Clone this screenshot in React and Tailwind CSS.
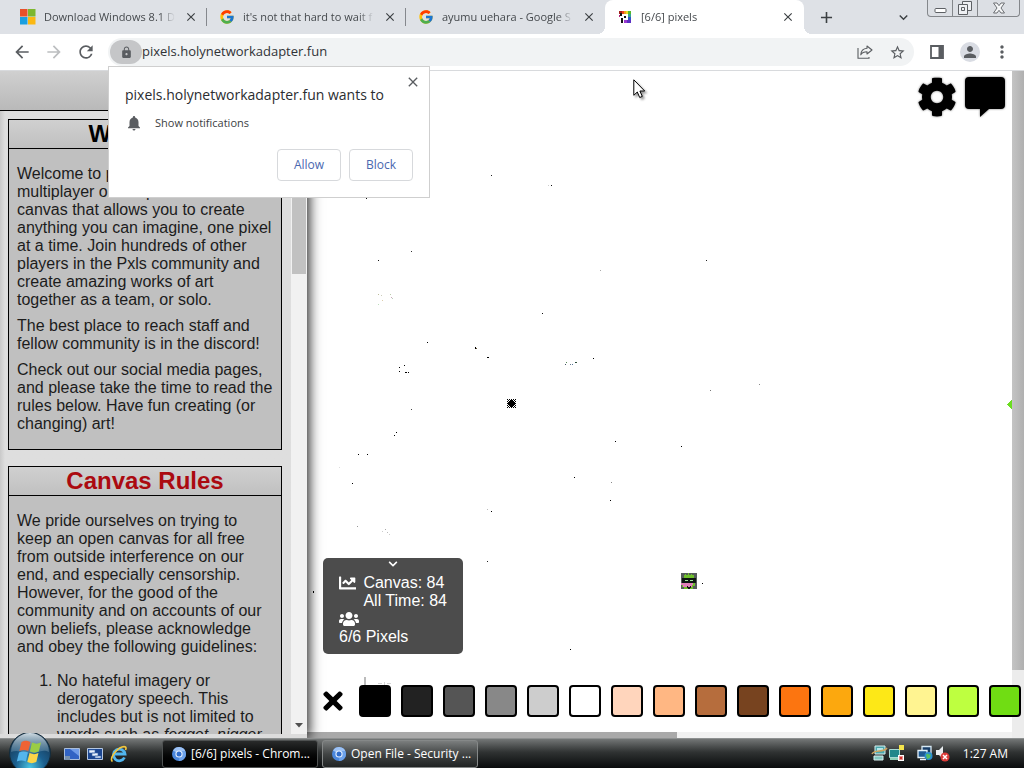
import React from "react";
import {
  MdArrowBack,
  MdArrowForward,
  MdRefresh,
  MdLock,
  MdStarBorder,
  MdNotifications,
  MdPerson,
  MdMoreVert,
  MdClose,
  MdAdd,
  MdExpandMore,
} from "react-icons/md";
import { FaCog, FaChartLine, FaUsers, FaTimes, FaChevronDown } from "react-icons/fa";
import { FcGoogle } from "react-icons/fc";

const ui = "font-['Open_Sans','Noto_Sans',sans-serif]";

function WindowsTiles() {
  return (
    <svg width="16" height="16" viewBox="0 0 16 16" className="shrink-0" aria-hidden="true">
      <path fill="#e8502a" d="M0 0h7.5v7.5H0z" />
      <path fill="#7db72f" d="M8 0h7.5v7.5H8z" />
      <path fill="#1a9fe0" d="M0 8h7.5v7.5H0z" />
      <path fill="#fbb813" d="M8 8h7.5v7.5H8z" />
    </svg>
  );
}

function GoogleG() {
  return <FcGoogle size={16} className="shrink-0" />;
}

function PxlsIcon() {
  return (
    <svg width="14" height="14" viewBox="0 0 14 14" className="mx-px shrink-0" aria-hidden="true">
      <path fill="#a3201c" d="M1 1h3v3H1z" />
      <path fill="#e8441c" d="M4 1h2v3H4z" />
      <path fill="#f0a01c" d="M6 1h2v3H6z" />
      <path fill="#e9dc27" d="M8 1h2v3H8z" />
      <path fill="#56b82c" d="M10 1h3v3h-3z" />
      <path fill="#35a58c" d="M10 4h3v3h-3z" />
      <path fill="#3353c8" d="M10 7h3v3h-3z" />
      <path fill="#5b31c4" d="M9 10h4v3H9z" />
      <path fill="#9a3bd0" d="M6 10h3v3H6z" />
      <path fill="#111" d="M2 3h2v3H2zM6 6h2v2H6zM3 8h2v5H3z" />
      <path fill="#b0207a" d="M1 5h1v2H1z" />
    </svg>
  );
}

const tabs = [
  { title: "Download Windows 8.1 D", icon: <WindowsTiles /> },
  { title: "it's not that hard to wait f", icon: <GoogleG /> },
  { title: "ayumu uehara - Google S", icon: <GoogleG /> },
  { title: "[6/6] pixels", icon: <PxlsIcon />, active: true },
];

function Tab({ title, icon, active, line }) {
  return (
    <div
      className={
        "relative flex h-[34px] w-[199px] items-center pl-3 pr-2 " +
        (active ? "rounded-t-lg bg-white" : "")
      }
    >
      {active && (
        <>
          <span className="absolute bottom-0 -left-2 size-2 bg-[radial-gradient(circle_at_0_0,transparent_8px,white_8px)]" />
          <span className="absolute bottom-0 -right-2 size-2 bg-[radial-gradient(circle_at_100%_0,transparent_8px,white_8px)]" />
        </>
      )}
      {icon}
      <span className="ml-2 flex-1 whitespace-nowrap text-[11px] leading-4 text-[#45494d] [mask-image:linear-gradient(to_right,black_88%,transparent)]">
        {title}
      </span>
      <button aria-label={"Close " + title} className="ml-2 flex size-4 items-center justify-center text-[#3c4043]">
        <MdClose size={14} />
      </button>
      {line && <span className="absolute right-0 top-2 h-[18px] w-px bg-[#85888d]" />}
    </div>
  );
}

function WindowControls() {
  return (
    <div className="flex h-[17px] w-[93px] self-start rounded-b border border-t-0 border-[#84878b] bg-[#dcdfe4]">
      <button aria-label="Minimize" className="flex flex-1 items-center justify-center border-r border-[#84878b]">
        <svg width="13" height="13" viewBox="0 0 13 13" aria-hidden="true">
          <rect x="1" y="6.5" width="11" height="4" rx="1" fill="#fff" stroke="#5d6064" />
        </svg>
      </button>
      <button aria-label="Restore" className="flex flex-1 items-center justify-center border-r border-[#84878b]">
        <svg width="14" height="14" viewBox="0 0 14 14" fill="#eef0f3" stroke="#5d6064" aria-hidden="true">
          <path d="M4.500 .5h9v9h-9z" />
          <path d="M.5 3.500h9v10h-9z" />
          <path d="M3.500 6.500h3v3h-3z" />
        </svg>
      </button>
      <button aria-label="Close window" className="flex flex-[1.7] items-center justify-center">
        <svg width="14" height="12" viewBox="0 0 14 12" fill="#f6f7f8" stroke="#6c6f73" aria-hidden="true">
          <path d="M1.500 1h3.500l2 2.700L9 1h3.500L9 6l3.500 5H9L7 8.300 5 11H1.500L5 6z" />
        </svg>
      </button>
    </div>
  );
}

function TabStrip() {
  return (
    <header className="flex h-[34px] shrink-0 bg-[#dee1e6] pl-2 pr-1">
      {tabs.map((t, i) => (
        <Tab key={t.title} {...t} line={i < 2} />
      ))}
      <button aria-label="New tab" className="ml-2 flex w-7 items-center justify-center text-[#3c4043]">
        <MdAdd size={19} />
      </button>
      <div className="flex-1" />
      <button aria-label="Search tabs" className="mr-3 flex w-6 items-center justify-center text-[#3c4043]">
        <MdExpandMore size={17} />
      </button>
      <WindowControls />
    </header>
  );
}

function Toolbar() {
  return (
    <nav className="flex h-[37px] shrink-0 items-center border-b border-[#d8dadd] bg-white pl-3 pr-3 text-[#5a5d61]">
      <div className="flex gap-3">
        <button aria-label="Back"><MdArrowBack size={20} /></button>
        <button aria-label="Forward" className="text-[#bcbec0]"><MdArrowForward size={20} /></button>
        <button aria-label="Reload"><MdRefresh size={20} /></button>
      </div>
      <div className="ml-3 flex h-7 flex-1 items-center rounded-full bg-[#f1f3f4] pl-[2px] pr-2">
        <button aria-label="View site information" className="flex h-6 w-8 items-center justify-center rounded-full bg-[#c5c6c8]">
          <MdLock size={13} />
        </button>
        <input
          aria-label="Address"
          defaultValue="pixels.holynetworkadapter.fun"
          className="min-w-0 flex-1 bg-transparent text-[13px] text-[#303236] outline-none"
        />
        <div className="flex items-center gap-4">
          <button aria-label="Share">
            <svg width="16" height="16" viewBox="0 0 16 16" fill="none" stroke="currentColor" strokeWidth="1.100" aria-hidden="true">
              <path d="M1 4v10.300h11V13" />
              <path d="M10 2l5 4-5 4V7.800C7 7.800 5 8.800 3.800 10.800 4 7 6.500 4.500 10 4.200z" strokeLinejoin="round" />
            </svg>
          </button>
          <button aria-label="Bookmark"><MdStarBorder size={17} /></button>
        </div>
      </div>
      <div className="ml-4 flex items-center gap-3">
        <button aria-label="Side panel" className="mr-1">
          <svg width="14" height="14" viewBox="0 0 14 14" aria-hidden="true">
            <path d="M1 1h12v12H1z" fill="none" stroke="currentColor" strokeWidth="1.800" />
            <path d="M8.500 1H13v12H8.500z" fill="currentColor" />
          </svg>
        </button>
        <button aria-label="Profile" className="flex size-5 items-center justify-center rounded-full bg-[#d9dce3]">
          <MdPerson size={18} />
        </button>
        <button aria-label="Menu"><MdMoreVert size={20} /></button>
      </div>
    </nav>
  );
}

function Permission() {
  return (
    <section
      role="dialog"
      aria-label="Notification permission"
      className="absolute left-[108px] top-[66px] z-20 flex h-[132px] w-[322px] flex-col border border-[#cfcfcf] bg-white p-4"
    >
      <button aria-label="Dismiss" className="absolute right-2 top-[7px] text-[#5a5d61]">
        <MdClose size={16} />
      </button>
      <h2 className="mt-0.5 text-[14px] leading-5 text-[#2b2d30]">pixels.holynetworkadapter.fun wants to</h2>
      <p className="mt-2 flex items-center text-[11px] leading-5 text-[#3c3e42]">
        <MdNotifications size={18} className="mr-3 text-[#5a5d61]" />
        Show notifications
      </p>
      <div className="mt-auto flex justify-end gap-2 text-[12px] text-[#4a68b0]">
        <button className="h-8 w-16 rounded border border-[#d7d9dc]">Allow</button>
        <button className="h-8 w-16 rounded border border-[#d7d9dc]">Block</button>
      </div>
    </section>
  );
}

function Card({ title, red, children }) {
  return (
    <article className="border border-black bg-[#c0c0c0]">
      <h2
        className={
          "h-[29px] border-b border-black bg-linear-to-b from-[#d0d0d0] to-[#c0c0c0] text-center text-[24px] font-bold leading-7 " +
          (red ? "text-[#ab0a10]" : "text-black")
        }
      >
        {title}
      </h2>
      <div className="space-y-2 px-2 py-4 text-[#1c1c1c]">{children}</div>
    </article>
  );
}

function Sidebar() {
  return (
    <aside className="relative z-10 flex w-[307px] shrink-0 flex-col bg-[#dedede] font-['Liberation_Sans',Arial,sans-serif] text-[16px] leading-[18px] shadow-[2px_0_12px_rgba(0,0,0,0.9)]">
      <h1 className="h-10 shrink-0 border-b border-black bg-linear-to-b from-[#d0d0d0] to-[#b9b9b9] text-center text-[24px] font-bold leading-[38px]">
        Canvas
      </h1>
      <div className="flex min-h-0 flex-1">
        <div className="flex-1 overflow-hidden bg-linear-to-r from-[#c9c9c9] to-[#dedede] to-[5px] py-2 pl-2 pr-[9px]">
          <div className="flex flex-col gap-4">
            <Card title="Welcome!">
              <p>
                Welcome to pixels, a free
                <br />
                multiplayer online pixel art
                <br />
                canvas that allows you to create anything you can imagine, one pixel at a time. Join hundreds
                of other players in the Pxls community and create amazing works of art together as a team, or
                solo.
              </p>
              <p>The best place to reach staff and fellow community is in the discord!</p>
              <p>
                Check out our social media pages, and please take the time to read the rules below. Have fun
                creating (or changing) art!
              </p>
            </Card>
            <Card title="Canvas Rules" red>
              <p>
                We pride ourselves on trying to keep an open canvas for all free from outside interference on
                our end, and especially censorship. However, for the good of the community and on accounts of
                our own beliefs, please acknowledge and obey the following guidelines:
              </p>
              <ol className="list-decimal pl-10 pt-2">
                <li>
                  No hateful imagery or derogatory speech. This includes but is not limited to words such as{" "}
                  <i>fegget, nigger</i>
                </li>
              </ol>
            </Card>
          </div>
        </div>
        <div className="flex w-4 flex-col items-center bg-[#f1f1f1]">
          <div className="h-[163px] w-[14px] bg-[#c1c1c1]" />
          <svg width="8" height="5" viewBox="0 0 8 5" className="mb-1.5 mt-auto" aria-hidden="true">
            <path d="M0 0h8L4 4.500z" fill="#505050" />
          </svg>
        </div>
      </div>
      <div className="h-1 shrink-0 bg-[#dcdcdc]" />
    </aside>
  );
}

const dots = [
  [491, 175, "#222"], [551, 185, "#111"], [548, 185, "#ccc"], [366, 198, "#111"], [411, 251, "#333"], [378, 260, "#111"],
  [706, 260, "#222"], [600, 270, "#aaa"], [378, 294, "#bb9"], [381, 295, "#ccb"], [382, 300, "#dca"], [378, 304, "#bdb"],
  [390, 294, "#bca"], [391, 297, "#cab"], [392, 298, "#bcb"], [542, 313, "#111"], [427, 342, "#000"], [475, 347, "#000"],
  [475, 348, "#000"], [476, 348, "#653"], [487, 357, "#000"], [488, 357, "#000"], [593, 358, "#000"], [565, 364, "#456"],
  [566, 362, "#585"], [570, 364, "#678"], [572, 364, "#579"], [575, 362, "#244"], [576, 362, "#353"], [404, 365, "#000"],
  [399, 367, "#000"], [399, 371, "#000"], [405, 372, "#000"], [406, 372, "#000"], [408, 372, "#000"], [710, 390, "#777"],
  [759, 384, "#888"], [411, 409, "#444"], [396, 432, "#000"], [394, 435, "#000"], [615, 441, "#000"], [681, 446, "#000"],
  [358, 454, "#000"], [367, 454, "#000"], [339, 467, "#ddd"], [574, 477, "#000"], [352, 483, "#000"], [611, 482, "#888"],
  [610, 500, "#000"], [487, 509, "#bbb"], [491, 511, "#000"], [357, 526, "#999"], [385, 529, "#aaa"], [387, 532, "#bbb"],
  [389, 534, "#ccc"], [382, 531, "#ccc"], [487, 561, "#222"], [313, 591, "#000"], [313, 592, "#000"], [702, 583, "#000"],
  [570, 649, "#000"],
];

const burst = ["x.x.x.x.x", ".x.xxx.x.", "x.xxxxx.x", ".xxxxxxx.", "xxxxxxxxx", ".xxxxxxx.", "x.xxxxx.x", ".x.xxx.x.", "x.x.x.x.x"];

function CanvasArt() {
  return (
    <svg className="absolute inset-0 size-full" shapeRendering="crispEdges" aria-hidden="true">
      <g transform="translate(-307 -71)">
        {dots.map(([x, y, c]) => (
          <rect key={x + "-" + y} x={x} y={y} width="1" height="1" fill={c} />
        ))}
        {burst.map((row, j) =>
          [...row].map((p, i) => p === "x" && <rect key={i + "-" + j} x={507 + i} y={399 + j} width="1" height="1" />)
        )}
        <path fill="#6bdd20" d="M1007 404h1v-1h1v-1h1v-1h1v-1h1v9h-1v-1h-1v-1h-1v-1h-1v-1h-1z" />
        <path fill="#bbb" d="M364 677h2v8h-2z" />
        <path fill="#d4d4d4" d="M378 683h4v1h-4zM384 682h1v3h-1zM387 683h4v1h-4z" />
        <path fill="#555b5b" d="M681 573h16v16h-16z" />
        <path fill="#6fc02c" d="M684 575h1v-1h1v1h2v-2h1v2h2v-1h1v1h2v3h1v8h-2v3h-9v-2h-2v-9h2z" />
        <path fill="#0c1410" d="M682 578h14v5h-14z" />
        <path fill="#a4e8a0" d="M685 580h3v1h-3zM690 580h3v1h-3z" />
        <path fill="#e07fb8" d="M681 583h12v2h-1v2h-9v-2h-2z" />
        <path fill="#111" d="M687 586h1v1h2v-1h1v2h-1v1h-2v-1h-1z" />
      </g>
    </svg>
  );
}

const swatches = [
  ["Black", "bg-[#000000]"], ["Dark grey", "bg-[#222222]"], ["Deep grey", "bg-[#555555]"], ["Medium grey", "bg-[#888888]"],
  ["Light grey", "bg-[#cdcdcd]"], ["White", "bg-[#ffffff]"], ["Beige", "bg-[#ffd5bc]"], ["Peach", "bg-[#ffb783]"],
  ["Brown", "bg-[#b66d3d]"], ["Chocolate", "bg-[#77431f]"], ["Orange", "bg-[#fc7510]"], ["Light orange", "bg-[#fca80e]"],
  ["Yellow", "bg-[#fde817]"], ["Pastel yellow", "bg-[#fff491]"], ["Lime", "bg-[#beff40]"], ["Green", "bg-[#70dd13]"],
];

function Board() {
  return (
    <main className="relative flex min-w-0 flex-1 flex-col bg-white font-['Liberation_Sans',Arial,sans-serif]">
      <CanvasArt />
      <div className="absolute inset-y-0 right-0 w-3 bg-[#ececec]">
        <div className="h-[599px] bg-linear-to-r from-[#c4c4c4] to-[#b0b0b0]" />
      </div>
      <div className="relative flex justify-end gap-1.5 pr-[18px] pt-1">
        <button aria-label="Settings" className="flex h-11 w-[42px] items-center justify-center text-black drop-shadow-[0_0_1px_#777]">
          <FaCog size={40} />
        </button>
        <button aria-label="Chat" className="drop-shadow-[0_0_1px_#777]">
          <svg width="42" height="42" viewBox="0 0 42 42" aria-hidden="true">
            <path d="M5 1h32a4 4 0 0 1 4 4v24a4 4 0 0 1-4 4H25l-9 8v-8H5a4 4 0 0 1-4-4V5a4 4 0 0 1 4-4z" />
          </svg>
        </button>
      </div>
      <div className="flex-1" />
      <section aria-label="Pixel counts" className="relative ml-4 h-24 w-[140px] rounded-[5px] bg-[#4c4c4c] px-4 text-[16px] leading-[18px] text-white">
        <button aria-label="Collapse" className="flex h-4 w-full items-center justify-center pb-1">
          <FaChevronDown size={10} />
        </button>
        <div className="flex gap-[7px]">
          <FaChartLine size={18} />
          <p className="whitespace-nowrap">
            Canvas: 84
            <br />
            All Time: 84
          </p>
        </div>
        <FaUsers size={20} className="h-[18px]" />
        <p>6/6 Pixels</p>
      </section>
      <div className="relative z-10 mb-[15px] ml-4 mt-[31px] flex items-center gap-[10px]">
        <button aria-label="Deselect colour" className="mr-1.5 flex size-5 shrink-0 items-center justify-center">
          <FaTimes size={28} className="shrink-0" />
        </button>
        {swatches.map(([name, colour]) => (
          <button key={name} aria-label={name} className={"size-8 shrink-0 rounded border-2 border-black " + colour} />
        ))}
      </div>
      <div className="mr-3 h-1.5 shrink-0 bg-[#f1f1f1]">
        <div className="h-full w-[52.5%] bg-[#a9a9a9]" />
      </div>
    </main>
  );
}

function ChromiumIcon() {
  return (
    <svg width="16" height="16" viewBox="0 0 16 16" className="shrink-0" aria-hidden="true">
      <circle cx="8" cy="8" r="7" fill="#4b87dc" />
      <path d="M8 8L2 4.500A7 7 0 0 1 14.500 5.500H8z" fill="#9dc2f5" />
      <path d="M8 15a7 7 0 0 0 6.500-9.500H9z" fill="#6da2ea" />
      <circle cx="8" cy="8" r="3.600" fill="#e8f1fd" />
      <circle cx="8" cy="8" r="2.500" fill="#2f6ccb" />
    </svg>
  );
}

function StartOrb() {
  return (
    <svg width="44" height="36" viewBox="0 0 44 36" aria-hidden="true">
      <defs>
        <radialGradient id="orb" cx="50%" cy="85%" r="80%">
          <stop offset="0" stopColor="#49c3e2" />
          <stop offset=".45" stopColor="#1c5f8e" />
          <stop offset="1" stopColor="#163450" />
        </radialGradient>
        <linearGradient id="shine" x1="0" y1="0" x2="0" y2="1">
          <stop offset="0" stopColor="#e4eef3" stopOpacity=".9" />
          <stop offset="1" stopColor="#84a9bd" stopOpacity=".25" />
        </linearGradient>
      </defs>
      <circle cx="22" cy="20" r="20.500" fill="url(#orb)" stroke="#142c3b" />
      <path d="M3 19A19 19 0 0 1 41 19c-8-4-13 3-19 2S10 16 3 19z" fill="url(#shine)" />
      <path d="M13.500 9c3.500-2 5.500-1.500 9 0l-2.200 9c-3.300-1.500-5.500-1.500-9 0z" fill="#ee6335" />
      <path d="M24 9.500c3.500 1.500 5.500 1.500 9 0l-2.200 9c-3.500 1.500-5.700 1.500-9 0z" fill="#9acd45" />
      <path d="M11 19.500c3.500-1.500 5.500-1.500 9 0l-2.200 9c-3.300-1.500-5.500-1.500-9 0z" fill="#54b5ec" />
      <path d="M21.500 20c3.500 1.500 5.500 1.500 9 0l-2.200 9c-3.500 1.500-5.700 1.500-9 0z" fill="#fbd548" />
    </svg>
  );
}

function QuickLaunch() {
  return (
    <div className="flex items-center gap-[7px]">
      <button aria-label="Show desktop">
        <svg width="16" height="16" viewBox="0 0 16 16" aria-hidden="true">
          <path d="M.5 2.500h15v11H.5z" fill="#3163c4" stroke="#a9bedc" />
          <path d="M6 3h9v7z" fill="#6f9be8" />
          <path d="M1 10h5v4H1z" fill="#7891ae" />
        </svg>
      </button>
      <button aria-label="Switch between windows">
        <svg width="16" height="16" viewBox="0 0 16 16" aria-hidden="true">
          <path d="M.5 2.500h15v11H.5z" fill="#1c4792" stroke="#b4c7e2" />
          <path d="M2 4h6v3H2zM5 7h6v3H5zM8 10h6v2H8z" fill="#eaf2fc" stroke="#3b66aa" strokeWidth=".6" />
        </svg>
      </button>
      <button aria-label="Internet Explorer">
        <svg width="18" height="18" viewBox="0 0 18 18" fill="none" aria-hidden="true">
          <path d="M14.500 12.500A5.800 5.800 0 1 1 15 9H5" stroke="#51b6ef" strokeWidth="2.800" />
          <path d="M2.500 16.500C-1 14 6 4 12 2c3-1 5 0 3.500 3" stroke="#f3c73c" strokeWidth="1.600" />
        </svg>
      </button>
    </div>
  );
}

function Tray() {
  return (
    <div className="ml-auto flex items-center pr-4 text-[12px] text-white">
      <svg width="34" height="18" viewBox="0 0 34 18" aria-hidden="true">
        <path d="M4 1h10v8H4z" fill="#4aa7ad" stroke="#d8efef" />
        <path d="M6 3h6v3H6z" fill="#b7e6ea" />
        <path d="M3 11h9v4H3z" fill="#83c7c0" stroke="#d8efef" />
        <path d="M1 9c2-5 12-1 15-6" stroke="#cda35d" strokeWidth="1.500" fill="none" />
        <path d="M18.500 4.500h10v8h-10z" fill="#21888b" stroke="#a5dbd4" />
        <path d="M19 13h8v2h-8z" fill="#8dd0b8" />
        <path d="M28 0h5v5h-5z" fill="#f4e44c" />
        <path d="M27 10h6v6h-6z" fill="#fff" />
        <path d="M28.500 11.500l3 3M31.500 11.500l-3 3" stroke="#d22f2b" strokeWidth="1.500" />
      </svg>
      <svg width="34" height="18" viewBox="0 0 34 18" className="ml-3 mr-3" aria-hidden="true">
        <path d="M5 1.500h9v7H5z" fill="#173d67" stroke="#d8eaf5" strokeWidth="1.300" />
        <path d="M1 5.500h9v7H1z" fill="#205b94" stroke="#e5f2fa" strokeWidth="1.300" />
        <path d="M3 14.500h6" stroke="#e5f2fa" strokeWidth="1.500" />
        <circle cx="11.500" cy="11" r="4" fill="#2b8ed0" />
        <path d="M9 10c2-3 3 1 5-1l-1 4-3 1z" fill="#55bd62" />
        <path d="M19 5h3l4-4v13l-4-4h-3z" fill="#e9edf0" />
        <circle cx="28" cy="12" r="4.500" fill="#dc3b38" />
        <path d="M26 10l4 4M30 10l-4 4" stroke="#fff" strokeWidth="1.500" />
      </svg>
      <time>1:27 AM</time>
    </div>
  );
}

function Taskbar() {
  return (
    <footer className="relative z-20 flex h-[30px] shrink-0 items-center border-t border-[#8d9090] bg-linear-to-b from-[#747777] via-[#303333] via-45% to-[#0a0c0d]">
      <button aria-label="Start" className="-mt-1.5 ml-2 mr-3">
        <StartOrb />
      </button>
      <QuickLaunch />
      <div className="ml-[34px] flex gap-1 text-[12px] text-white">
        <button className="flex h-7 w-[156px] items-center gap-1 rounded-[3px] border border-[#4e5151] bg-linear-to-b from-[#292b2b] to-black px-2 whitespace-nowrap">
          <ChromiumIcon />
          [6/6] pixels - Chrom...
        </button>
        <button className="flex h-7 w-[156px] items-center gap-1 rounded-[3px] border border-[#858888] bg-linear-to-b from-[#7b7e7e] via-[#424545] via-50% to-[#202323] px-2 whitespace-nowrap">
          <ChromiumIcon />
          Open File - Security ...
        </button>
      </div>
      <Tray />
    </footer>
  );
}

export default function App() {
  return (
    <div className={"relative flex h-screen flex-col overflow-hidden bg-white " + ui}>
      <TabStrip />
      <Toolbar />
      <Permission />
      <div className="flex min-h-0 flex-1 overflow-hidden">
        <Sidebar />
        <Board />
      </div>
      <Taskbar />
      <svg width="14" height="21" viewBox="0 0 14 21" className="absolute left-[633px] top-[79px] z-30 drop-shadow-[2px_2px_1px_#999]" aria-hidden="true">
        <path d="M.8.8v15.500l3.500-3.300 2.400 5.500 2.600-1.100-2.400-5.400h4.800z" fill="#fff" stroke="#000" />
      </svg>
    </div>
  );
}
